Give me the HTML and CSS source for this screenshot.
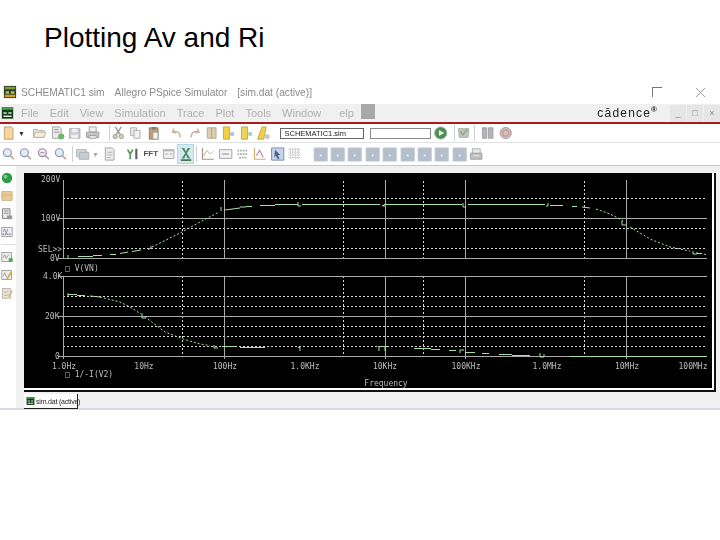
FILE: index.html
```html
<!DOCTYPE html>
<html lang="en">
<head>
    <meta charset="UTF-8">
    <title>Plotting Av and Ri</title>
    <link rel="stylesheet" href="styles.css">
</head>
<body>
    <h1 class="slide-title">Plotting Av and Ri</h1>

    <svg class="sprites" width="0" height="0">
        <symbol id="i-new" viewBox="0 0 16 16"><path d="M3 1h8l2 2v12H3z" fill="#f3cf8e" stroke="#a88a5c"/></symbol>
        <symbol id="i-open" viewBox="0 0 16 16"><path d="M1 4h5l1 1h6v8H1z" fill="#e8e0cc" stroke="#a8a08c"/><path d="M3 7h12l-2 6H1z" fill="#f1ead8" stroke="#a8a08c"/></symbol>
        <symbol id="i-docplus" viewBox="0 0 16 16"><path d="M2 1h8l2 2v11H2z" fill="#e8e8e8" stroke="#8a8a8a"/><path d="M4 4h5M4 7h6" stroke="#777"/><circle cx="12" cy="12" r="3.5" fill="#5aa85a"/></symbol>
        <symbol id="i-save" viewBox="0 0 16 16"><path d="M2 3h12v11H2z" fill="#c4c6cc" stroke="#9a9a9f"/><path d="M5 3h6v4H5zM4 10h8v4H4z" fill="#eee"/></symbol>
        <symbol id="i-print" viewBox="0 0 16 16"><path d="M4 1h8v6H4z" fill="#eee" stroke="#888"/><path d="M1 7h14v6H1z" fill="#bbb" stroke="#888"/><path d="M4 11h8v3H4z" fill="#eee" stroke="#888"/></symbol>
        <symbol id="i-cut" viewBox="0 0 16 16"><path d="M4 1l6 9M11 1L5 10" stroke="#8a8a8a" stroke-width="1.6" fill="none"/><circle cx="4" cy="12" r="2.5" fill="#c8c8a8" stroke="#8a8a7a"/><circle cx="11" cy="12" r="2.5" fill="#c8c8a8" stroke="#8a8a7a"/></symbol>
        <symbol id="i-copy" viewBox="0 0 16 16"><path d="M2 2h7v9H2z" fill="#e4e4e4" stroke="#9a9a9a"/><path d="M6 5h7v9H6z" fill="#efefef" stroke="#9a9a9a"/></symbol>
        <symbol id="i-paste" viewBox="0 0 16 16"><path d="M3 2h10v13H3z" fill="#b88c58" stroke="#7a6040"/><path d="M6 1h4v3H6z" fill="#666"/><path d="M7 7h6v8H7z" fill="#f0f0f0" stroke="#888"/></symbol>
        <symbol id="i-undo" viewBox="0 0 16 16"><path d="M5 3L3 7l4 1M3 7c5-2 9 0 9 6" stroke="#c8a878" stroke-width="1.6" fill="none"/></symbol>
        <symbol id="i-redo" viewBox="0 0 16 16"><path d="M11 3l2 4-4 1M13 7c-5-2-9 0-9 6" stroke="#c8a090" stroke-width="1.6" fill="none"/></symbol>
        <symbol id="i-book" viewBox="0 0 16 16"><path d="M3 2h10v12H3z" fill="#d8c8a0" stroke="#a09478"/><path d="M8 2v12" stroke="#9a8e72"/></symbol>
        <symbol id="i-yblue" viewBox="0 0 16 16"><path d="M2 1h7v14H2z" fill="#f0c820" stroke="#b09820"/><circle cx="12" cy="9" r="2.5" fill="#a8b8d8"/></symbol>
        <symbol id="i-ygreen" viewBox="0 0 16 16"><path d="M2 1h7v14H2z" fill="#eccb40" stroke="#b09820"/><circle cx="12" cy="9" r="2.5" fill="#a8c8b0"/></symbol>
        <symbol id="i-ydiag" viewBox="0 0 16 16"><path d="M6 1h5L8 15H1z" fill="#ecc930" stroke="#b09820"/><circle cx="12" cy="12" r="3" fill="#c0c0c0"/></symbol>
        <symbol id="i-play" viewBox="0 0 16 16"><circle cx="8" cy="8" r="7" fill="#2f7a3a" stroke="#8aa88e"/><path d="M6 4.5L12 8l-6 3.5z" fill="#e8f0d8"/></symbol>
        <symbol id="i-chart" viewBox="0 0 16 16"><path d="M2 3h12l-1 10H3z" fill="#b8bcb0" stroke="#9a9e92"/><path d="M4 6l3 4 5-6" stroke="#6a9a6a" stroke-width="1.4" fill="none"/></symbol>
        <symbol id="i-pause" viewBox="0 0 16 16"><path d="M2 2h5v12H2zM9 2h5v12H9z" fill="#a8a8ac" stroke="#8c8c90"/></symbol>
        <symbol id="i-stop" viewBox="0 0 16 16"><circle cx="8" cy="8" r="6.5" fill="#b8b0b0" stroke="#9a9090"/><circle cx="8" cy="8" r="3.5" fill="#e0b0a8" stroke="#c07870"/></symbol>
        <symbol id="i-zoom" viewBox="0 0 16 16"><circle cx="6.500" cy="6.500" r="4.500" fill="#dfe8f4" stroke="#7a8aa8" stroke-width="1.4"/><path d="M10 10l4 4" stroke="#b89080" stroke-width="2"/></symbol>
        <symbol id="i-zoomred" viewBox="0 0 16 16"><circle cx="6.500" cy="6.500" r="4.500" fill="#e8e8f4" stroke="#7a7a9a" stroke-width="1.4"/><path d="M4 6.500h5" stroke="#b06060"/><path d="M10 10l4 4" stroke="#a89088" stroke-width="2"/></symbol>
        <symbol id="i-panel" viewBox="0 0 16 16"><path d="M1 3h11v8H1z" fill="#d0d4d8" stroke="#9aa0a4"/><path d="M4 6h11v8H4z" fill="#c0c4c8" stroke="#9aa0a4"/></symbol>
        <symbol id="i-doc" viewBox="0 0 16 16"><path d="M3 1h8l2 2v12H3z" fill="#e8e8ea" stroke="#8a8e92"/><path d="M5 6h6M5 9h6M5 12h4" stroke="#a0a4a8"/></symbol>
        <symbol id="i-yi" viewBox="0 0 16 16"><path d="M1 3l3 5 3-5M4 8v6" stroke="#3c8a3c" stroke-width="2" fill="none"/><path d="M11 2v12" stroke="#444" stroke-width="2.4"/></symbol>
        <symbol id="i-win" viewBox="0 0 16 16"><path d="M2 3h12v10H2z" fill="#f0f0f0" stroke="#8a8a8a"/><path d="M2 3h12v2H2z" fill="#a8b0b8"/><path d="M4 8h3M9 8h3" stroke="#888"/></symbol>
        <symbol id="i-excel" viewBox="0 0 16 16"><path d="M3 1l4 6-4 6h3l2-4 2 4h3L9 7l4-6h-3L8 5 6 1z" fill="#2f7f42"/><path d="M2 14h12v2H2z" fill="#2f5f36"/></symbol>
        <symbol id="i-axis" viewBox="0 0 16 16"><path d="M2 1v13h13" stroke="#9a8070" fill="none" stroke-width="1.3"/><path d="M3 11l4-7 4 4 3-3" stroke="#c08870" fill="none"/></symbol>
        <symbol id="i-box" viewBox="0 0 16 16"><path d="M1 3h14v10H1z" fill="#f2f2f2" stroke="#8a8a8a"/><path d="M4 8h8" stroke="#667"/></symbol>
        <symbol id="i-abc" viewBox="0 0 16 16"><path d="M2 4h12M2 8h12M4 12h8" stroke="#9aa0a8" stroke-width="2" stroke-dasharray="2 1"/></symbol>
        <symbol id="i-peak" viewBox="0 0 16 16"><path d="M2 1v13h13" stroke="#c8a050" fill="none" stroke-width="1.3"/><path d="M4 10l4-6 4 8" stroke="#b070a0" fill="none" stroke-width="1.3"/></symbol>
        <symbol id="i-cursor" viewBox="0 0 16 16"><path d="M1 1h14v14H1z" fill="#bccde8" stroke="#5a70a0"/><path d="M5 3l6 6-3 .5 2 3.5-2 1-2-4-2 2z" fill="#34486c"/></symbol>
        <symbol id="i-grid" viewBox="0 0 16 16"><path d="M1 3h14M1 6h14M1 9h14M1 12h14M3 1v14M6 1v14M9 1v14M12 1v14" stroke="#9a9aa4" stroke-dasharray="1 1"/></symbol>
        <symbol id="i-mark" viewBox="0 0 16 16"><path d="M1 1h14v14H1z" fill="#a8b4c4" stroke="#b4bcc8"/><path d="M7 8h2v2H7z" fill="#e8ecf0"/></symbol>
        <symbol id="i-log" viewBox="0 0 16 16"><path d="M3 2h9v9H3z" fill="#e8e8e8" stroke="#9a9a9a"/><path d="M1 7h13v7H1z" fill="#b0b4b4" stroke="#8a8e8e"/><path d="M4 10h7" stroke="#eee"/></symbol>
        <symbol id="i-ball" viewBox="0 0 16 16"><circle cx="8" cy="8" r="7" fill="#2e9a4a"/><circle cx="6" cy="6" r="2.500" fill="#7ad08a"/></symbol>
        <symbol id="i-tan" viewBox="0 0 16 16"><path d="M1 2h14v12H1z" fill="#e8c894" stroke="#c8ad80"/><path d="M1 7h14" stroke="#d4ae74"/></symbol>
        <symbol id="i-sheet" viewBox="0 0 16 16"><path d="M2 1h10v13H2z" fill="#e8e8e8" stroke="#666"/><path d="M4 4h6M4 7h6" stroke="#777"/><path d="M8 10h7v5H8z" fill="#999"/></symbol>
        <symbol id="i-wave" viewBox="0 0 16 16"><path d="M1 2h14v12H1z" fill="#f0f0f0" stroke="#8a8a8a"/><path d="M3 8l2-4 2 6 2-6" stroke="#77a" fill="none"/><path d="M2 11h12" stroke="#888" stroke-dasharray="2 1" stroke-width="2"/></symbol>
        <symbol id="i-waveadd" viewBox="0 0 16 16"><path d="M1 2h13v12H1z" fill="#eee" stroke="#8a8a8a"/><path d="M3 9l2-4 2 5 3-5" stroke="#a77" fill="none"/><circle cx="13" cy="12" r="3" fill="#5aa85a"/></symbol>
        <symbol id="i-waveedit" viewBox="0 0 16 16"><path d="M1 2h13v12H1z" fill="#eee" stroke="#8a8a8a"/><path d="M3 9l2-4 2 5" stroke="#a77" fill="none"/><path d="M14 4l-6 9" stroke="#d8a840" stroke-width="2.4"/></symbol>
        <symbol id="i-notes" viewBox="0 0 16 16"><path d="M2 2h11v13H2z" fill="#e8e4d8" stroke="#a8a498"/><path d="M4 6l2 2 4-4M4 11h6" stroke="#b8a070" fill="none"/><path d="M15 5l-5 8" stroke="#d8b890" stroke-width="2"/></symbol>
        <symbol id="i-app" viewBox="0 0 16 16"><path d="M1 1h14v14H1z" fill="#2a3a2a"/><path d="M2 2h12v3H2z" fill="#7a9a3a"/><path d="M3 7h4v3H3zM9 7h4v3H9z" fill="#a8c848"/><path d="M2 11h12v3H2z" fill="#c8a030"/></symbol>
        <symbol id="i-sim" viewBox="0 0 16 16"><path d="M1 1h14v14H1z" fill="#143c1c"/><path d="M1 1h14v3H1z" fill="#48a048"/><path d="M3 7h4v2H3zM9 7h4v2H9zM3 11h10v2H3z" fill="#d8e8d0"/></symbol>
    </svg>

    <div class="shot">
        <div class="titlebar">
            <svg class="appicon"><use href="#i-app"/></svg>
            <span class="apptitle">SCHEMATIC1 sim</span>
            <span class="apptitle">Allegro PSpice Simulator</span>
            <span class="apptitle">[sim.dat (active)]</span>
            <span class="winctl">
                <span class="maxbox"></span>
                <svg class="closex" viewBox="0 0 10 10"><path d="M0 0l10 10M10 0L0 10"/></svg>
            </span>
        </div>

        <div class="menubar">
            <svg class="menuicon"><use href="#i-sim"/></svg>
            <nav class="menu">
                <span>File</span><span>Edit</span><span>View</span><span>Simulation</span><span>Trace</span><span>Plot</span><span>Tools</span><span>Window</span><span class="help">elp</span>
            </nav>
            <span class="greyblock"></span>
            <span class="logo">cādence<sup>®</sup></span>
            <span class="mdibtn">_</span><span class="mdibtn">&#9633;</span><span class="mdibtn">×</span>
        </div>

        <div class="toolbar tb-one">
            <svg class="tb"><use href="#i-new"/></svg>
            <span class="drop">▼</span>
            <svg class="tb sp6"><use href="#i-open"/></svg>
            <svg class="tb"><use href="#i-docplus"/></svg>
            <svg class="tb"><use href="#i-save"/></svg>
            <svg class="tb"><use href="#i-print"/></svg>
            <span class="sep sep8"></span>
            <svg class="tb"><use href="#i-cut"/></svg>
            <svg class="tb"><use href="#i-copy"/></svg>
            <svg class="tb"><use href="#i-paste"/></svg>
            <svg class="tb sp6"><use href="#i-undo"/></svg>
            <svg class="tb"><use href="#i-redo"/></svg>
            <svg class="tb"><use href="#i-book"/></svg>
            <svg class="tb"><use href="#i-yblue"/></svg>
            <svg class="tb"><use href="#i-ygreen"/></svg>
            <svg class="tb"><use href="#i-ydiag"/></svg>
            <span class="combo">SCHEMATIC1.sim</span>
            <span class="combo combo2"></span>
            <svg class="tb playbtn"><use href="#i-play"/></svg>
            <span class="sep sep4"></span>
            <svg class="tb"><use href="#i-chart"/></svg>
            <span class="sep sep2"></span>
            <svg class="tb sp4"><use href="#i-pause"/></svg>
            <svg class="tb"><use href="#i-stop"/></svg>
        </div>

        <div class="toolbar tb-two">
            <svg class="tb"><use href="#i-zoom"/></svg>
            <svg class="tb"><use href="#i-zoom"/></svg>
            <svg class="tb"><use href="#i-zoomred"/></svg>
            <svg class="tb"><use href="#i-zoom"/></svg>
            <span class="sep sep2"></span>
            <svg class="tb sp1"><use href="#i-panel"/></svg>
            <span class="drop drop-light">▼</span>
            <svg class="tb sp2"><use href="#i-doc"/></svg>
            <svg class="tb sp6"><use href="#i-yi"/></svg>
            <span class="tb fft">FFT</span>
            <svg class="tb"><use href="#i-win"/></svg>
            <span class="tb active"><svg class="tb-inner"><use href="#i-excel"/></svg></span>
            <span class="sep sep2"></span>
            <svg class="tb sp2"><use href="#i-axis"/></svg>
            <svg class="tb"><use href="#i-box"/></svg>
            <svg class="tb"><use href="#i-abc"/></svg>
            <svg class="tb"><use href="#i-peak"/></svg>
            <svg class="tb"><use href="#i-cursor"/></svg>
            <svg class="tb"><use href="#i-grid"/></svg>
            <svg class="tb mark sp8"><use href="#i-mark"/></svg>
            <svg class="tb mark"><use href="#i-mark"/></svg>
            <svg class="tb mark"><use href="#i-mark"/></svg>
            <svg class="tb mark"><use href="#i-mark"/></svg>
            <svg class="tb mark"><use href="#i-mark"/></svg>
            <svg class="tb mark"><use href="#i-mark"/></svg>
            <svg class="tb mark"><use href="#i-mark"/></svg>
            <svg class="tb mark"><use href="#i-mark"/></svg>
            <svg class="tb mark"><use href="#i-mark"/></svg>
            <svg class="tb"><use href="#i-log"/></svg>
        </div>

        <div class="main">
            <aside class="side">
                <svg><use href="#i-ball"/></svg>
                <svg><use href="#i-tan"/></svg>
                <svg><use href="#i-sheet"/></svg>
                <svg><use href="#i-wave"/></svg>
                <span class="side-rule"></span>
                <svg><use href="#i-waveadd"/></svg>
                <svg><use href="#i-waveedit"/></svg>
                <svg><use href="#i-notes"/></svg>
            </aside>

            <div class="mdi">
                <div class="plotframe">
                    <svg class="plot" viewBox="24 172 688 215" width="688" height="215">
                        <!-- dotted grid -->
                        <path class="dots" d="M63 197.500H707M63 227.500H707M63 247.500H707M63 295.500H707M63 305.500H707M63 325.500H707M63 335.500H707M63 345.500H707"/>
                        <path class="dots" d="M182.500 180V257M343.500 180V257M423.500 180V257M584.500 180V257M182.500 275V355M343.500 275V355M423.500 275V355M584.500 275V355"/>
                        <!-- solid grid -->
                        <path class="solid" d="M63.500 179V257M224.500 179V257M385.500 179V257M465.500 179V257M626.500 179V257M63.500 275V358M224.500 275V358M385.500 275V358M465.500 275V358M626.500 275V358"/>
                        <path class="solid" d="M58 217.500H707M58 257.500H707M58 275.500H707M58 315.500H707M58 355.500H707"/>

                        <!-- upper trace V(VN) -->
                        <path class="trace" d="M68 254v3M78 255.500H93M93 254.500H102M110 253.500H116M120 252.500L128 251M132 250.500L141 249M148 248.500L151 247V245"/>
                        <path class="trace dotted" d="M152 246L182 231L200 221L219 211"/>
                        <path class="trace" d="M221 210V206M225 209L240 207M240 206H246M246 205.500H252M260 204.500H275M275 203.500H298M298 201v4h3M302 203.500H380M384 204.500H382M384 206V203.500H462M463 202v4h3M468 203.500H545M548 202v3h-2M550 204.500H563M572 205.500H577M582 206L590 207"/>
                        <path class="trace dotted" d="M596 208L610 213L618 217L623 220"/>
                        <path class="trace" d="M622 220v4h5"/>
                        <path class="trace dotted" d="M630 226L650 238L670 246L690 250"/>
                        <path class="trace" d="M693 250v3h4v-2M697 252.500H702"/>
                        <path class="trace dotted" d="M704 253L707 254"/>

                        <!-- lower trace 1/-I(V2) -->
                        <path class="trace" d="M68 292v3M68 293.500H77M77 294.500H85M90 295L100 296"/>
                        <path class="trace dotted" d="M100 296L120 301L130 306L141 313"/>
                        <path class="trace" d="M142 312v5h4v-2"/>
                        <path class="trace dotted" d="M148 318L165 331L183 338L200 343L210 344.500"/>
                        <path class="trace" d="M214 344v3h4M222 345.500H235M240 346.500H265M298 346.500H300V350M378 345.500H387M379 345.500V350M385 345.500V350M414 347.500H431M431 348.500H440M449 349.500H456M460 352V349H464M465 351.500H475M482 352.500H489M499 353.500H512M512 354.500H530M540 352v4h4v-3"/>
                        <path class="trace" d="M570 355.500H707"/>

                        <!-- axis labels -->
                        <text class="lbl" x="41" y="181">200V</text>
                        <text class="lbl" x="41" y="220">100V</text>
                        <text class="lbl" x="38" y="251">SEL&gt;&gt;</text>
                        <text class="lbl" x="50" y="260">0V</text>
                        <text class="lbl" x="65" y="270">□ V(VN)</text>
                        <text class="lbl" x="43" y="278">4.0K</text>
                        <text class="lbl" x="45" y="318">20K</text>
                        <text class="lbl" x="55" y="358">0</text>
                        <text class="lbl mid" x="64" y="368">1.0Hz</text>
                        <text class="lbl mid" x="144" y="368">10Hz</text>
                        <text class="lbl mid" x="225" y="368">100Hz</text>
                        <text class="lbl mid" x="305" y="368">1.0KHz</text>
                        <text class="lbl mid" x="385" y="368">10KHz</text>
                        <text class="lbl mid" x="466" y="368">100KHz</text>
                        <text class="lbl mid" x="547" y="368">1.0MHz</text>
                        <text class="lbl mid" x="627" y="368">10MHz</text>
                        <text class="lbl mid" x="693" y="368">100MHz</text>
                        <text class="lbl" x="65" y="376">□ 1/-I(V2)</text>
                        <text class="lbl mid" x="386" y="385">Frequency</text>
                    </svg>
                </div>
                <div class="tabs">
                    <span class="tab"><svg><use href="#i-sim"/></svg>sim.dat (active)</span>
                </div>
            </div>
        </div>
        <div class="statusline"></div>
    </div>
</body>
</html>
```

FILE: styles.css
```css
body {
    margin: 0;
    background: white;
    font-family: "Liberation Sans", Arial, sans-serif;
    overflow: hidden;
}

.slide-title {
    margin: 0;
    height: 80px;
    padding: 22px 0 0 44px;
    box-sizing: border-box;
    font-size: 28px;
    font-weight: normal;
    line-height: 32px;
    color: #000;
}

.sprites {
    position: absolute;
}

.shot {
    filter: blur(0.4px);
}

/* Window title */
.titlebar {
    display: flex;
    align-items: center;
    height: 24px;
    padding-left: 3px;
    gap: 10px;
    background: white;
}

.appicon {
    width: 14px;
    height: 14px;
    margin-right: -6px;
}

.apptitle {
    font-size: 10.2px;
    color: #8a8a8a;
    white-space: nowrap;
}

.winctl {
    display: flex;
    align-items: center;
    gap: 34px;
    margin-left: auto;
    padding-right: 15px;
}

.maxbox {
    width: 9px;
    height: 9px;
    border-top: 1px solid #777;
    border-left: 1px solid #777;
}

.closex {
    width: 9px;
    height: 9px;
    fill: none;
    stroke: #999;
}

/* Menu */
.menubar {
    display: flex;
    align-items: center;
    height: 18px;
    background: #f0f0f0;
    border-bottom: 2px solid #a51c1c;
}

.menuicon {
    width: 13px;
    height: 14px;
    margin: 0 7px 0 1px;
}

.menu {
    display: flex;
    gap: 11px;
    font-size: 11px;
    color: #b0b0b0;
}

.help {
    margin-left: 7px;
}

.greyblock {
    width: 14px;
    height: 15px;
    margin: -3px 0 0 7px;
    background: #a8a8a8;
}

.logo {
    margin-left: auto;
    margin-right: 12px;
    font-size: 12px;
    letter-spacing: 1.2px;
    color: #222;
}

.logo sup {
    font-size: 8px;
    line-height: 0;
    font-weight: bold;
    letter-spacing: 0;
}

.mdibtn {
    width: 16px;
    height: 17px;
    margin-left: 1px;
    font-size: 9px;
    line-height: 17px;
    text-align: center;
    color: #888;
    background: #e6e6e6;
}

/* Toolbars */
.toolbar {
    display: flex;
    align-items: center;
    background: white;
}

.tb-one {
    height: 18px;
}

.tb-two {
    height: 22px;
    border-bottom: 1px solid #c8c8c8;
    border-top: 1px solid #e2e2e2;
}

.tb {
    flex: none;
    width: 17.4px;
    height: 14px;
    opacity: 0.85;
}

.mark {
    height: 15px;
}

.sp1 { margin-left: 1.4px; }
.sp2 { margin-left: 2px; }
.sp4 { margin-left: 4px; }
.sp6 { margin-left: 6px; }
.sp8 { margin-left: 8px; }

.drop {
    flex: none;
    width: 8px;
    font-size: 7px;
    text-align: center;
    color: #333;
}

.drop-light {
    color: #aaa;
}

.sep {
    flex: none;
    width: 1px;
    height: 16px;
    background: #cfcfcf;
}

.sep2 { margin-left: 2px; }
.sep4 { margin-left: 4px; }
.sep8 { margin-left: 8px; }

.combo {
    flex: none;
    box-sizing: border-box;
    width: 84px;
    height: 11px;
    margin-left: 8px;
    padding-left: 3px;
    border: 1px solid #666;
    font-size: 7.5px;
    line-height: 9px;
    color: #222;
    overflow: hidden;
}

.combo2 {
    width: 61px;
    margin-left: 6px;
    border-color: #888;
}

.playbtn {
    margin-left: 1px;
}

.fft {
    font-size: 8px;
    font-weight: bold;
    line-height: 14px;
    text-align: center;
    color: #333;
}

.active {
    display: flex;
    justify-content: center;
    align-items: center;
    height: 20px;
    background: #cde6f0;
    outline: 1px solid #a8d0e0;
    outline-offset: -1px;
}

.tb-inner {
    width: 14px;
    height: 14px;
}

/* Plot area */
.main {
    display: flex;
    background: white;
}

.side {
    flex: none;
    box-sizing: border-box;
    display: flex;
    flex-direction: column;
    align-items: flex-start;
    gap: 6px;
    width: 16px;
    padding: 6px 0 0 1px;
}

.side svg {
    width: 12px;
    height: 12px;
}

.side-rule {
    width: 15px;
    height: 1px;
    background: #ddd;
}

.mdi {
    flex: 1;
    min-width: 0;
    padding-top: 7px;
    background: #f0f0f0;
}

.plotframe {
    box-sizing: border-box;
    width: 692px;
    margin-left: 8px;
    height: 219px;
    border-right: 2px solid #111;
    border-bottom: 2px solid #111;
    background: white;
}

.plot {
    display: block;
    background: black;
}

.dots {
    fill: none;
    stroke: #d8d8d8;
    stroke-dasharray: 2 2;
}

.solid {
    fill: none;
    stroke: #ababab;
}

.trace {
    fill: none;
    stroke: #a8e0a8;
}

.trace.dotted {
    stroke-dasharray: 2 2;
}

.lbl {
    font-family: "DejaVu Sans Mono", monospace;
    font-size: 8px;
    fill: #bdbdbd;
}

.mid {
    text-anchor: middle;
}

.tabs {
    height: 16px;
}

.tab {
    display: inline-flex;
    align-items: center;
    gap: 1px;
    box-sizing: border-box;
    width: 54px;
    height: 15px;
    margin-left: 8px;
    padding-left: 2px;
    border-right: 1px solid #222;
    border-bottom: 1px solid #222;
    background: white;
    font-size: 7px;
    letter-spacing: -0.2px;
    color: #222;
    white-space: nowrap;
}

.tab svg {
    flex: none;
    width: 9px;
    height: 10px;
}

.statusline {
    height: 2px;
    background: #d8dce4;
}
```
